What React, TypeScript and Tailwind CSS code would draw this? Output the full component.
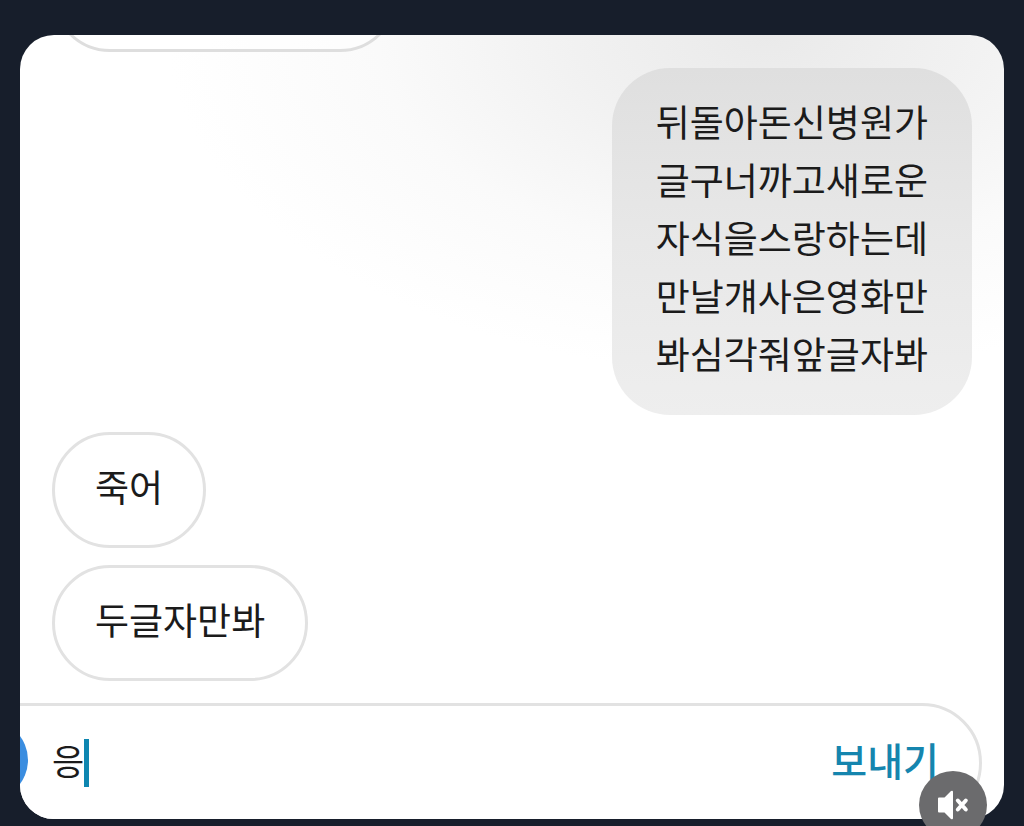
import { useState } from "react";

type Message = {
  id: number;
  mine: boolean;
  lines: string[];
};

const messages: Message[] = [
  {
    id: 1,
    mine: true,
    lines: [
      "뒤돌아돈신병원가",
      "글구너까고새로운",
      "자식을스랑하는데",
      "만날걔사은영화만",
      "봐심각줘앞글자봐",
    ],
  },
  { id: 2, mine: false, lines: ["죽어"] },
  { id: 3, mine: false, lines: ["두글자만봐"] },
];

const Bubble = ({ mine, lines }: Message) => {
  const style = mine
    ? "self-end rounded-[58px] bg-linear-to-b from-[#dfdfdf] via-[#e8e8e8] to-[#eeeeee] px-11 pt-6 pb-[33px]"
    : "self-start rounded-[58px] border-3 border-[#e2e2e2] bg-white px-10 pt-[22px] pb-[30px]";

  return (
    <li className={style}>
      {lines.map((line) => (
        <p key={line} className="text-[37px] leading-[58px]">
          {line}
        </p>
      ))}
    </li>
  );
};

const MuteButton = () => (
  <button
    type="button"
    aria-label="Unmute"
    className="absolute right-[37px] top-[771px] flex size-[68px] items-center justify-center rounded-full bg-[#6b6b6d]"
  >
    <svg viewBox="0 0 32 30" className="h-[30px] w-8" aria-hidden="true">
      <path
        d="M2 7.500h5.500L14 1Q16 0 16 2v26q0 2-2 1L7.500 22.500H2q-1 0-1-1v-13q0-1 1-1z"
        fill="#fff"
      />
      <path
        d="M20.800 10.500l8 9M28.800 10.500l-8 9"
        stroke="#fff"
        strokeWidth="4"
        strokeLinecap="round"
      />
    </svg>
  </button>
);

const Composer = () => {
  const [text, setText] = useState("응");

  return (
    <form
      className="relative -ml-16 -mb-1 mr-[22px] mt-[22px] flex h-[120px] items-center rounded-[60px] border-3 border-[#e2e2e2] bg-white pl-[93px] pr-10"
      onSubmit={(e) => e.preventDefault()}
    >
      <span className="absolute left-[-11px] top-[14px] size-20 rounded-full bg-[#3a8de0]" />
      <input
        aria-label="메시지"
        value={text}
        onChange={(e) => setText(e.target.value)}
        className="h-14 w-8 pb-2 text-[35px] outline-none"
      />
      <span className="h-12 w-[5px] bg-[#0e86b0]" />
      <button
        type="submit"
        className="ml-auto pb-2 text-[39px] leading-[58px] font-medium text-[#1585ae]"
      >
        보내기
      </button>
    </form>
  );
};

export default function App() {
  return (
    <div className="relative h-screen min-h-[826px] overflow-hidden bg-[#171e2b] px-5 pt-[35px] font-['Noto_Sans_CJK_KR',sans-serif] text-[#1b1b1b]">
      <main className="overflow-hidden rounded-[34px] bg-white bg-[radial-gradient(ellipse_600px_340px_at_76%_0%,#eaeaea_0%,#f1f1f1_32%,#fafafa_65%,#ffffff_100%)]">
        <div className="ml-8 -mt-[99px] h-[116px] w-[346px] rounded-[58px] border-3 border-[#dedede] bg-white/50" />
        <ul className="mt-4 flex flex-col gap-[17px] px-8">
          {messages.map((m) => (
            <Bubble key={m.id} {...m} />
          ))}
        </ul>
        <Composer />
      </main>
      <MuteButton />
    </div>
  );
}
